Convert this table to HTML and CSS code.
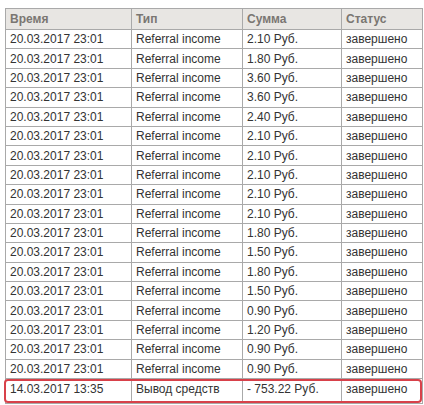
FILE: index.html
```html
<!DOCTYPE html>
<html lang="ru">
<head>
<meta charset="utf-8">
<title>История операций</title>
<link rel="stylesheet" href="styles.css">
</head>
<body>
<div class="wrap">
<table class="ops">
<colgroup><col class="c1"><col class="c2"><col class="c3"><col class="c4"></colgroup>
<thead>
<tr><th>Время</th><th>Тип</th><th>Сумма</th><th>Статус</th></tr>
</thead>
<tbody>
<tr><td>20.03.2017 23:01</td><td>Referral income</td><td>2.10 Руб.</td><td>завершено</td></tr>
<tr><td>20.03.2017 23:01</td><td>Referral income</td><td>1.80 Руб.</td><td>завершено</td></tr>
<tr><td>20.03.2017 23:01</td><td>Referral income</td><td>3.60 Руб.</td><td>завершено</td></tr>
<tr><td>20.03.2017 23:01</td><td>Referral income</td><td>3.60 Руб.</td><td>завершено</td></tr>
<tr><td>20.03.2017 23:01</td><td>Referral income</td><td>2.40 Руб.</td><td>завершено</td></tr>
<tr><td>20.03.2017 23:01</td><td>Referral income</td><td>2.10 Руб.</td><td>завершено</td></tr>
<tr><td>20.03.2017 23:01</td><td>Referral income</td><td>2.10 Руб.</td><td>завершено</td></tr>
<tr><td>20.03.2017 23:01</td><td>Referral income</td><td>2.10 Руб.</td><td>завершено</td></tr>
<tr><td>20.03.2017 23:01</td><td>Referral income</td><td>2.10 Руб.</td><td>завершено</td></tr>
<tr><td>20.03.2017 23:01</td><td>Referral income</td><td>2.10 Руб.</td><td>завершено</td></tr>
<tr><td>20.03.2017 23:01</td><td>Referral income</td><td>1.80 Руб.</td><td>завершено</td></tr>
<tr><td>20.03.2017 23:01</td><td>Referral income</td><td>1.50 Руб.</td><td>завершено</td></tr>
<tr><td>20.03.2017 23:01</td><td>Referral income</td><td>1.80 Руб.</td><td>завершено</td></tr>
<tr><td>20.03.2017 23:01</td><td>Referral income</td><td>1.50 Руб.</td><td>завершено</td></tr>
<tr><td>20.03.2017 23:01</td><td>Referral income</td><td>0.90 Руб.</td><td>завершено</td></tr>
<tr><td>20.03.2017 23:01</td><td>Referral income</td><td>1.20 Руб.</td><td>завершено</td></tr>
<tr><td>20.03.2017 23:01</td><td>Referral income</td><td>0.90 Руб.</td><td>завершено</td></tr>
<tr><td>20.03.2017 23:01</td><td>Referral income</td><td>0.90 Руб.</td><td>завершено</td></tr>
<tr class="last"><td>14.03.2017 13:35</td><td>Вывод средств</td><td>- 753.22 Руб.</td><td>завершено</td></tr>
</tbody>
</table>
<div class="highlight"></div>
</div>
</body>
</html>
```

FILE: styles.css
```css
html, body {
  margin: 0;
  padding: 0;
  background: #fff;
  overflow: hidden;
}
body {
  font-family: "Liberation Sans", Arial, sans-serif;
  font-size: 12px;
  color: #333;
}
.wrap {
  position: relative;
  padding: 8px 0 0 5px;
}
.ops {
  border-collapse: collapse;
  width: 417px;
  table-layout: fixed;
}
.c1 { width: 126px; }
.c2 { width: 111px; }
.c3 { width: 99px; }
.c4 { width: 81px; }
.ops th, .ops td {
  border: 1px solid #a9a9a9;
  padding: 0 4px;
  text-align: left;
  white-space: nowrap;
  overflow: hidden;
}
.ops th {
  background: #e8e6e3;
  color: #7a7672;
  font-weight: bold;
  height: 20px;
}
.ops td {
  height: 18.4px;
}
.ops .last td {
  padding-top: 3px;
  height: 21px;
  vertical-align: top;
}
.highlight {
  position: absolute;
  left: 4px;
  top: 379px;
  width: 414px;
  height: 20px;
  border: 2px solid #d8414a;
  border-radius: 4px;
  pointer-events: none;
}
```
